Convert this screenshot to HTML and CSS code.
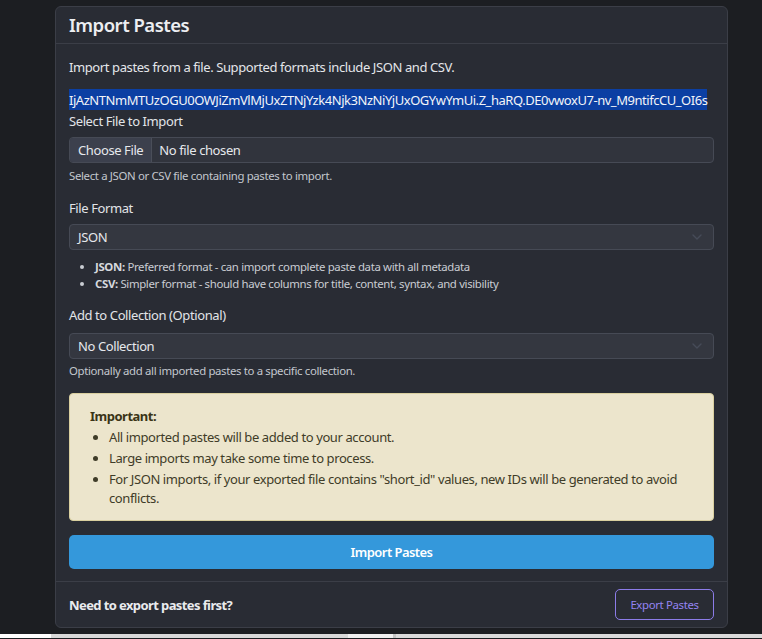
FILE: index.html
```html
<!DOCTYPE html>
<html lang="en">
<head>
<meta charset="utf-8">
<title>Import Pastes</title>
<link rel="stylesheet" href="styles.css">
</head>
<body>
<div class="card">
  <div class="card-header"><h4 class="title">Import Pastes</h4></div>
  <div class="card-body">
    <p class="intro">Import pastes from a file. Supported formats include JSON and CSV.</p>
    <div class="token"><span class="sel">IjAzNTNmMTUzOGU0OWJiZmVlMjUxZTNjYzk4Njk3NzNiYjUxOGYwYmUi.Z_haRQ.DE0vwoxU7-nv_M9ntifcCU_OI6s</span></div>

    <div class="field field-file">
      <div class="label">Select File to Import</div>
      <div class="file-input"><span class="file-btn">Choose File</span><span class="file-name">No file chosen</span></div>
      <div class="help">Select a JSON or CSV file containing pastes to import.</div>
    </div>

    <div class="field field-format">
      <div class="label">File Format</div>
      <div class="select"><span>JSON</span><svg class="chev" width="10" height="6" viewBox="0 0 10 6"><path d="M1 1l4 4 4-4" fill="none" stroke="#464b58" stroke-width="1.4" stroke-linecap="round" stroke-linejoin="round"/></svg></div>
      <ul class="fmt-list">
        <li><b>JSON:</b> Preferred format - can import complete paste data with all metadata</li>
        <li><b>CSV:</b> Simpler format - should have columns for title, content, syntax, and visibility</li>
      </ul>
    </div>

    <div class="field field-coll">
      <div class="label">Add to Collection (Optional)</div>
      <div class="select"><span>No Collection</span><svg class="chev" width="10" height="6" viewBox="0 0 10 6"><path d="M1 1l4 4 4-4" fill="none" stroke="#464b58" stroke-width="1.4" stroke-linecap="round" stroke-linejoin="round"/></svg></div>
      <div class="help help-coll">Optionally add all imported pastes to a specific collection.</div>
    </div>

    <div class="alert">
      <strong class="alert-title">Important:</strong>
      <ul class="alert-list">
        <li>All imported pastes will be added to your account.</li>
        <li>Large imports may take some time to process.</li>
        <li>For JSON imports, if your exported file contains "short_id" values, new IDs will be generated to avoid conflicts.</li>
      </ul>
    </div>

    <button class="btn-import" type="button">Import Pastes</button>
  </div>
  <div class="card-footer">
    <span class="footer-text">Need to export pastes first?</span>
    <button class="btn-export" type="button">Export Pastes</button>
  </div>
</div>
<div class="strip">
  <span class="s-white"></span><span class="s-gray"></span><span class="s-light"></span><span class="s-line"></span><span class="s-rest"></span>
</div>
</body>
</html>
```

FILE: styles.css
```css
html, body {
  margin: 0;
  padding: 0;
}
body {
  background: #1c1e22;
  font-family: "Noto Sans", "Open Sans", sans-serif;
  font-size: 13px;
  letter-spacing: -0.4px;
  color: #e4e6ea;
  width: 762px;
  height: 639px;
  overflow: hidden;
}
.card {
  margin: 6px 0 0 55px;
  width: 673px;
  box-sizing: border-box;
  background: #292c34;
  border: 1px solid #3b3e47;
  border-radius: 6px;
}
.card-header {
  height: 36px;
  border-bottom: 1px solid #3b3e47;
  padding: 0 13px;
  display: flex;
  align-items: center;
}
.title {
  margin: 0;
  font-size: 18.5px;
  font-weight: 600;
  letter-spacing: -0.5px;
  color: #eceef1;
  line-height: 24px;
}
.card-body {
  padding: 13px 13px 12px 13px;
}
.intro {
  margin: 0 0 12px;
  line-height: 21px;
}
.token {
  line-height: 21px;
  white-space: nowrap;
  letter-spacing: -0.46px;
}
.sel {
  background: #0b3fa3;
  color: #f2f4f8;
  padding: 2px 0 1px;
}
.label {
  line-height: 21px;
  color: #e2e4e8;
}
.field-file .label { margin-bottom: 5px; }
.file-input {
  height: 26px;
  box-sizing: border-box;
  border: 1px solid #464a55;
  border-radius: 4px;
  background: #31343d;
  display: flex;
  align-items: stretch;
  overflow: hidden;
}
.file-btn {
  display: flex;
  align-items: center;
  padding: 0 8px;
  background: #3c404d;
  border-right: 1px solid #4a4e59;
  color: #e6e8ec;
}
.file-name {
  display: flex;
  align-items: center;
  padding: 0 7px;
  color: #e6e8ec;
}
.help {
  font-size: 11.4px;
  letter-spacing: -0.35px;
  line-height: 18px;
  color: #c3c7ce;
  margin-top: 4px;
}
.field-format { margin-top: 13px; }
.field-format .label { margin-bottom: 5px; }
.select {
  height: 26px;
  box-sizing: border-box;
  border: 1px solid #464a55;
  border-radius: 4px;
  background: #343740;
  display: flex;
  align-items: center;
  justify-content: space-between;
  padding: 0 11px 0 8px;
  color: #e6e8ec;
}
.chev { display: block; }
.fmt-list {
  margin: 8px 0 0;
  padding-left: 26px;
  font-size: 11.4px;
  letter-spacing: -0.35px;
  line-height: 17px;
  color: #c9cdd3;
}
.fmt-list b { font-weight: 700; color: #d6d9de; }
.field-coll { margin-top: 13px; }
.field-coll .label { margin-bottom: 7px; }
.help-coll { margin-top: 3px; }
.alert {
  margin-top: 13px;
  background: #ece5cc;
  border: 1px solid #d9cf9f;
  border-radius: 4px;
  padding: 13px 20px 12px;
  color: #3f3c28;
  line-height: 19px;
}
.alert-title {
  display: block;
  font-weight: 700;
  letter-spacing: -0.5px;
  color: #3a3416;
}
.alert-list {
  margin: 0;
  padding-left: 19px;
}
.alert-list li { margin-top: 2px; }
.btn-import {
  display: block;
  width: 100%;
  margin-top: 14px;
  height: 34px;
  border: 0;
  border-radius: 5px;
  background: #3498db;
  color: #ffffff;
  font-family: inherit;
  font-size: 13px;
  letter-spacing: -0.55px;
  font-weight: 600;
}
.card-footer {
  border-top: 1px solid #3b3e47;
  padding: 7px 13px 7px 13px;
  display: flex;
  align-items: center;
  justify-content: space-between;
}
.footer-text {
  font-weight: 700;
  letter-spacing: -0.6px;
  color: #e9ebee;
}
.btn-export {
  width: 99px;
  height: 31px;
  box-sizing: border-box;
  background: transparent;
  border: 1px solid #8c7ce8;
  border-radius: 5px;
  color: #9484f2;
  font-family: inherit;
  font-size: 11.4px;
  letter-spacing: -0.35px;
  padding: 0;
}
.strip {
  margin-top: 6px;
  display: flex;
  height: 4px;
}
.strip span { display: block; height: 100%; }
.s-white { width: 51px; background: #ffffff; }
.s-gray { width: 297px; background: #d8d8d8; }
.s-light { width: 45px; background: #f0f0f0; }
.s-line { width: 3px; background: #c4c4c4; }
.s-rest { flex: 1; background: #dadada; }
```
